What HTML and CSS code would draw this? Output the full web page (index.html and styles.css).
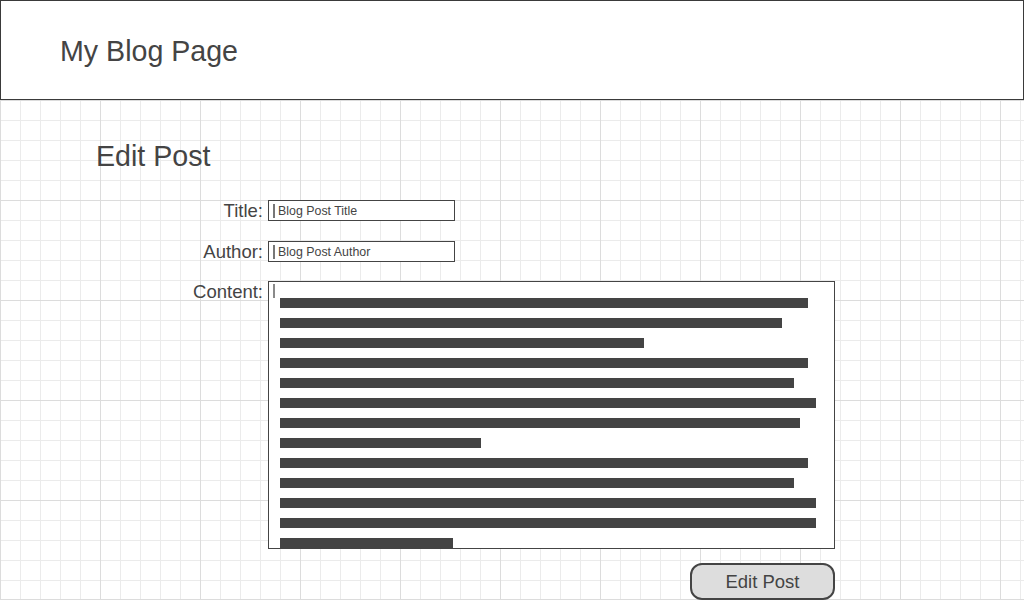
FILE: index.html
```html
<!DOCTYPE html>
<html lang="en">
<head>
<meta charset="utf-8">
<title>My Blog Page</title>
<link rel="stylesheet" href="styles.css">
</head>
<body>
  <header class="site-header">
    <div class="site-title">My Blog Page</div>
  </header>
  <main class="canvas">
    <h1 class="page-title">Edit Post</h1>
    <form class="post-form">
      <div class="form-row">
        <label class="form-label">Title:</label>
        <div class="text-input"><span class="caret"></span><span class="input-text">Blog Post Title</span></div>
      </div>
      <div class="form-row row-author">
        <label class="form-label">Author:</label>
        <div class="text-input"><span class="caret"></span><span class="input-text">Blog Post Author</span></div>
      </div>
      <div class="form-row row-content">
        <label class="form-label">Content:</label>
        <div class="text-area">
          <span class="caret caret-area"></span>
          <div class="lines">
            <div class="line" style="width:528px"></div>
            <div class="line" style="width:502px"></div>
            <div class="line" style="width:364px"></div>
            <div class="line" style="width:528px"></div>
            <div class="line" style="width:514px"></div>
            <div class="line" style="width:536px"></div>
            <div class="line" style="width:520px"></div>
            <div class="line" style="width:201px"></div>
            <div class="line" style="width:528px"></div>
            <div class="line" style="width:514px"></div>
            <div class="line" style="width:536px"></div>
            <div class="line" style="width:536px"></div>
            <div class="line" style="width:173px"></div>
          </div>
        </div>
      </div>
      <div class="actions">
        <div class="button">Edit Post</div>
      </div>
    </form>
  </main>
</body>
</html>
```
FILE: styles.css
```css
html, body {
  margin: 0;
  padding: 0;
  background: #fff;
}
body {
  font-family: "Liberation Sans", Arial, sans-serif;
  color: #444;
  width: 1024px;
  height: 601px;
  overflow: hidden;
}
.site-header {
  box-sizing: border-box;
  height: 100px;
  border: 1px solid #3a3a3a;
  padding: 34px 0 0 59px;
}
.site-title {
  font-size: 28.6px;
  line-height: 32px;
}
.canvas {
  box-sizing: border-box;
  display: block;
  height: 500px;
  padding: 40px 0 0 96px;
  border-bottom: 1px solid #dcdcdc;
  background-color: #fff;
  background-image:
    linear-gradient(to right, #dcdcdc 1px, transparent 1px),
    linear-gradient(to bottom, #dcdcdc 1px, transparent 1px),
    linear-gradient(to right, #ebebeb 1px, transparent 1px),
    linear-gradient(to bottom, #ebebeb 1px, transparent 1px);
  background-size: 100px 100px, 100px 100px, 20px 20px, 20px 20px;
  background-position: 0 0;
}
.page-title {
  margin: 0 0 28px;
  font-size: 28.6px;
  line-height: 32px;
  font-weight: normal;
}
.post-form {
  width: 739px;
  margin: 0;
}
.form-row {
  display: flex;
  align-items: flex-start;
  gap: 5px;
}
.row-author {
  margin-top: 20px;
}
.row-content {
  margin-top: 19px;
}
.form-label {
  width: 167px;
  text-align: right;
  font-size: 18.5px;
  line-height: 21px;
}
.text-input {
  box-sizing: border-box;
  width: 187px;
  height: 21px;
  border: 1px solid #444;
  background: #fff;
  display: flex;
  align-items: center;
  padding-left: 4px;
}
.caret {
  display: block;
  width: 2px;
  height: 14px;
  background: #777;
  flex: none;
}
.input-text {
  margin-left: 3px;
  font-size: 12.4px;
  line-height: 14px;
}
.text-area {
  box-sizing: border-box;
  width: 567px;
  height: 268px;
  border: 1px solid #444;
  background: #fff;
  overflow: hidden;
}
.caret-area {
  margin: 2px 0 0 4px;
  background: #8a8a8a;
}
.lines {
  padding-left: 11px;
}
.line {
  height: 10px;
  margin-bottom: 10px;
  background: #444;
}
.actions {
  display: flex;
  justify-content: flex-end;
  margin-top: 14px;
}
.button {
  box-sizing: border-box;
  width: 145px;
  height: 37px;
  border: 2px solid #444;
  border-radius: 12px;
  background: #ddd;
  display: flex;
  align-items: center;
  justify-content: center;
  font-size: 18.5px;
  padding-top: 1px;
}
```
